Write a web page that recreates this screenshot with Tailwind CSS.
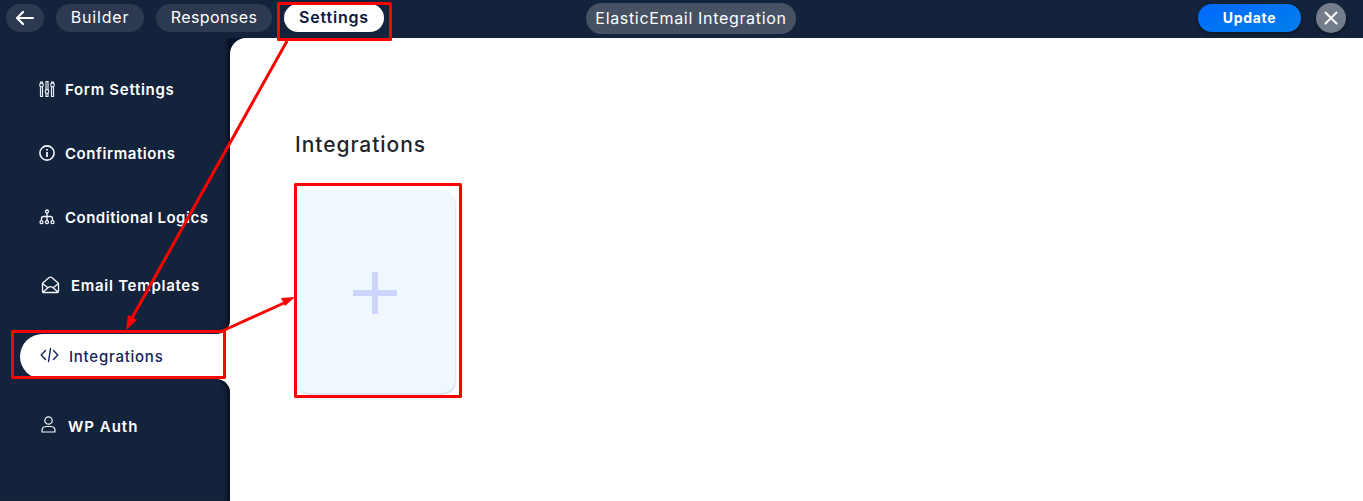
<!DOCTYPE html>
<html lang="en">
<head>
<meta charset="utf-8">
<title>ElasticEmail Integration</title>
<script src="https://cdn.jsdelivr.net/npm/@tailwindcss/browser@4"></script>
</head>
<body class="relative flex h-[501px] w-[1363px] flex-col overflow-hidden bg-[#14233c] font-['Inter','Liberation_Sans',sans-serif] text-white">
  <header class="flex h-[38px] shrink-0 items-start">
    <div class="flex w-[586px] gap-3 pt-1 pl-1.5 text-[16px] leading-[26px]">
      <button class="flex h-7 w-[38px] items-center justify-center rounded-full bg-[#2c3950]">
        <svg class="h-5 w-5" viewBox="0 0 20 20" fill="none" stroke="white" stroke-width="2.200" stroke-linecap="round" stroke-linejoin="round"><path d="M18 10H2M8 4 2 10l6 6"/></svg>
      </button>
      <button class="h-7 w-[88px] rounded-full bg-[#2c3950] pb-0.5 whitespace-nowrap tracking-[0.8px]">Builder</button>
      <button class="h-7 w-[116px] rounded-full bg-[#2c3950] pb-0.5 whitespace-nowrap tracking-[0.4px]">Responses</button>
      <button class="h-7 w-[100px] rounded-full bg-white pb-0.5 font-semibold whitespace-nowrap text-[#0b1640] tracking-[0.8px]">Settings</button>
    </div>
    <div class="mt-[3px] h-[31px] w-[210px] rounded-full bg-[#465164] text-center text-[16px] leading-[31px] whitespace-nowrap tracking-[0.67px]">ElasticEmail Integration</div>
    <div class="flex grow items-start justify-end gap-[15px] pt-[3px] pr-[17px]">
      <button class="mt-px h-7 w-[103px] rounded-full bg-linear-to-br from-[#0068ff] to-[#087fe9] text-[14px] leading-[28px] font-bold shadow-[0_2px_4px_#0006] tracking-[0.7px]">Update</button>
      <button class="flex h-[30px] w-[30px] items-center justify-center rounded-full bg-[#747d8c] shadow-[0_2px_4px_#0006]">
        <svg class="h-3.5 w-3.5" viewBox="0 0 14 14" fill="none" stroke="white" stroke-width="2" stroke-linecap="round"><path d="m1.500 1.500 11 11m0-11-11 11"/></svg>
      </button>
    </div>
  </header>

  <div class="flex grow">
    <aside class="flex w-[230px] shrink-0 flex-col bg-white text-[15px] font-semibold whitespace-nowrap">
      <div class="h-[296px] rounded-br-[14px] bg-[#14233c] pt-[19px] shadow-[inset_-5px_0_5px_-3px_#020916]">
        <div class="flex h-16 items-center pl-[39px]">
          <svg class="mr-[10px] h-4 w-4" viewBox="0 0 16 16" fill="none" stroke="#e9edf3" stroke-width="1.200"><circle cx="2.500" cy="4" r="1.800"/><circle cx="8" cy="10.500" r="1.800"/><circle cx="13.500" cy="4" r="1.800"/><path d="M1.500 2.500V1h2v1.500M1.500 5.500v10h2v-10M7 9V.5h2V9M7 12v3.500h2V12M12.500 2.500V1h2v1.500M12.500 5.500v10h2v-10"/></svg>
          <span class="pt-0.5 tracking-[0.7px]">Form Settings</span>
        </div>
        <div class="flex h-16 items-center pl-[39px]">
          <svg class="mr-[10px] h-4 w-4" viewBox="0 0 16 16" fill="none" stroke="#f4f6fa" stroke-width="1.600"><circle cx="8" cy="8" r="7.100"/><path d="M8 7v5M8 4v1.600" stroke-width="1.800"/></svg>
          <span class="pt-0.5 tracking-[0.57px]">Confirmations</span>
        </div>
        <div class="flex h-16 items-center pl-[39px]">
          <svg class="mr-[10px] h-4 w-4" viewBox="0 0 16 16" fill="none" stroke="#f4f6fa" stroke-width="1.300"><circle cx="8" cy="2.500" r="1.500"/><circle cx="2.500" cy="13.200" r="1.500"/><circle cx="8" cy="13.200" r="1.500"/><circle cx="13.500" cy="13.200" r="1.500"/><path d="M8 4v7.700M2.500 11.700V9.500Q2.500 7.500 4.500 7.500h7q2 0 2 2v2.200"/></svg>
          <span class="pt-0.5 tracking-[0.5px]">Conditional Logics</span>
        </div>
        <div class="flex h-[72px] items-center pl-[41px]">
          <svg class="mr-[11px] h-[18px] w-[19px]" viewBox="0 0 19 18" fill="none" stroke="#f4f6fa" stroke-width="1.300" stroke-linejoin="round"><path d="M1.500 7.200 8.200 1.500q1.300-.9 2.600 0l6.700 5.700v8q0 1.300-1.300 1.300H2.800q-1.300 0-1.300-1.300zM1.500 7.500l5.600 4.400m10.400-4.400-5.600 4.400M2 16l5.500-4.700q2-1.500 4 0L17 16"/></svg>
          <span class="pt-0.5 tracking-[0.72px]">Email Templates</span>
        </div>
      </div>
      <div class="flex h-[45px] items-center bg-[#14233c] pl-5">
        <div class="flex h-full grow items-center rounded-l-full bg-white pl-[20px] font-medium text-[#13235b]">
          <svg class="mr-[10px] mb-1 h-4 w-[19px]" viewBox="0 0 19 16" fill="none" stroke="#13235b" stroke-width="1.400" stroke-linecap="round" stroke-linejoin="round"><path d="M5.500 3.500 1.200 8l4.300 4.500m8-9L17.800 8l-4.300 4.500M10.500 1.500l-2 13"/></svg>
          <span class="pt-0.5 tracking-[0.75px]">Integrations</span>
        </div>
      </div>
      <div class="grow rounded-tr-[14px] bg-[#14233c] pt-6 shadow-[inset_-5px_0_5px_-3px_#020916]">
        <div class="flex h-[46px] items-center pl-[41px]">
          <svg class="mr-[12px] mb-1 h-[17px] w-[15px]" viewBox="0 0 15 17" fill="none" stroke="#f4f6fa" stroke-width="1.200" stroke-linejoin="round"><circle cx="7.500" cy="4.500" r="3.700"/><path d="M1 16q-.5-5.500 4-5.500h5q4.500 0 4 5.500z"/></svg>
          <span class="pt-0.5 tracking-[1px]">WP Auth</span>
        </div>
      </div>
    </aside>
    <main class="grow bg-[#07142b]">
      <div class="h-full rounded-tl-[16px] bg-white pt-[90px] pl-[65px]">
        <h1 class="h-8 text-[21px] leading-[33px] font-medium text-[#212529] tracking-[0.95px]">Integrations</h1>
        <button class="mt-[30px] flex h-[203px] w-[160px] items-center justify-center rounded-[14px] bg-[#eff7ff] pt-0.5 shadow-[1px_2px_2px_#d9e1f0]">
          <svg class="h-11 w-11" viewBox="0 0 44 44" stroke="#cdd5ff" stroke-width="6"><path d="M0 22h44M22 1v42"/></svg>
        </button>
      </div>
    </main>
  </div>

  <svg class="pointer-events-none absolute inset-0" width="1363" height="501" viewBox="0 0 1363 501" fill="none" stroke="#fe0000" stroke-width="3" stroke-linejoin="round">
    <path d="M278.500 3.500h112v36h-112zM12.500 331.500h212v46h-212zM295.500 184.500h165v212h-165z"/>
    <path d="M287 41 132 318M220 332l64-29"/>
    <path d="m126 330 2-15 9 5zM295 297l-10 9-4-8z" fill="#fe0000" stroke="none"/>
  </svg>
</body>
</html>
